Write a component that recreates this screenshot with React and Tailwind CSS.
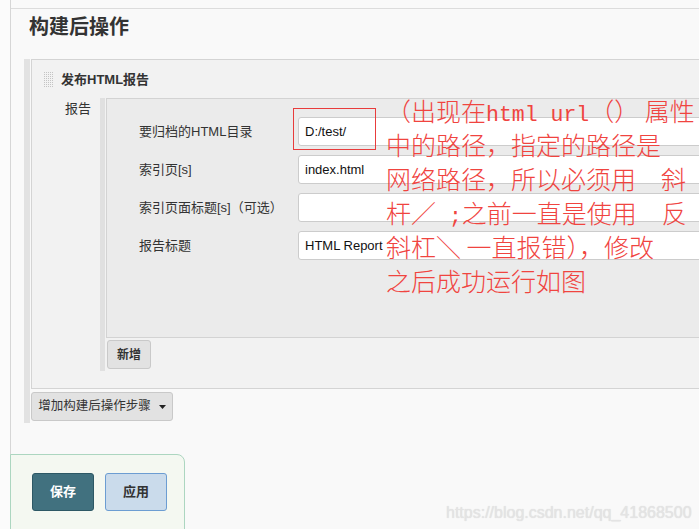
const ui = {
  fontFamily: '"Liberation Sans", "Noto Sans CJK SC", sans-serif',
};

const mono = { fontFamily: '"Liberation Mono", monospace' };

function DragHandle() {
  const dots = [];
  for (let r = 0; r < 8; r++) {
    for (let c = 0; c < 5; c++) {
      dots.push(
        <rect key={r + "-" + c} x={c * 2} y={r * 2} width="1" height="1" fill="#c4c4c4" />
      );
    }
  }
  return (
    <svg width="10" height="16" viewBox="0 0 10 16">
      {dots}
    </svg>
  );
}

function Field({ label, value }) {
  return (
    <div className="flex items-center h-[29px]">
      <div className="w-[159px] shrink-0 text-[13px] text-[#333]">{label}</div>
      <div className="flex-1 h-[29px] bg-white border border-[#cccccc] rounded-[3px] flex items-center px-[6px] text-[13px] text-[#111]">
        {value}
      </div>
    </div>
  );
}

export default function App() {
  return (
    <div
      className="w-[699px] h-[529px] overflow-hidden relative bg-[#f9f9f9] flex"
      style={ui}
    >
      {/* left strip */}
      <div className="w-[11px] shrink-0 bg-[#fbfbfb] border-r border-[#d6d6d6]" />

      <div className="flex-1 min-w-0 flex flex-col">
        <div className="h-[9px] shrink-0 border-b border-[#dcdcdc]" />

        <h1 className="ml-[18px] mt-[4px] text-[20px] leading-[28px] font-bold text-[#333]">
          构建后操作
        </h1>

        {/* publisher section */}
        <div className="ml-[13px] mt-[18px] w-[760px] shrink-0 border-l-[6px] border-[#e2e2e2] pb-[2px]">
          <div className="ml-[1px] border-t border-b border-l border-[#d4d4d4] bg-[#f2f2f2] pb-[17px]">
            <div className="flex items-center mt-[10px] h-[20px] pl-[12px] gap-[7px]">
              <DragHandle />
              <span className="text-[13px] font-bold text-[#333]">发布HTML报告</span>
            </div>

            <div className="flex mt-[8px]">
              <div className="w-[68px] shrink-0 text-right pr-[9px] pt-[2px] text-[13px] leading-[18px] text-[#333]">
                报告
              </div>

              <div className="flex-1 border-l-[5px] border-[#e0e0e0] pb-[2px]">
                <div className="ml-[1px] border-t border-b border-l border-[#d3d3d3] bg-[#ebebeb] pt-[18px] pb-[77px] pl-[32px] flex flex-col gap-[9px]">
                  <Field label="要归档的HTML目录" value="D:/test/" />
                  <Field label="索引页[s]" value="index.html" />
                  <Field label="索引页面标题[s]（可选）" value="" />
                  <Field label="报告标题" value="HTML Report" />
                </div>
                <button className="mt-[2px] ml-[2px] w-[44px] h-[29px] bg-[#e2e2e2] border border-[#c9c9c9] rounded-[3px] text-[12px] font-bold text-[#333]">
                  新增
                </button>
              </div>
            </div>
          </div>

          <button className="mt-[3px] ml-[1px] w-[142px] h-[29px] bg-[#e2e2e2] border border-[#c9c9c9] rounded-[3px] text-[12.5px] text-[#333] flex items-center justify-center gap-[8px]">
            <span>增加构建后操作步骤</span>
            <svg width="7" height="4" viewBox="0 0 7 4">
              <path d="M0 0h7L3.5 4z" fill="#222" />
            </svg>
          </button>
        </div>

        {/* bottom sticky bar */}
        <div className="ml-[-1px] mt-[31px] w-[175px] h-[80px] shrink-0 bg-[#f4f8f1] border border-[#acd6c0] rounded-tr-[8px] flex gap-[11px] pl-[21px] pt-[18px]">
          <button className="w-[62px] h-[38px] bg-[#41717f] border border-[#2d5865] rounded-[3px] text-white text-[13px] font-bold">
            保存
          </button>
          <button className="w-[62px] h-[38px] bg-[#cadbeb] border border-[#6c9dd2] rounded-[3px] text-[#333] text-[13px] font-bold">
            应用
          </button>
        </div>
      </div>

      {/* annotation box */}
      <div className="absolute left-[293px] top-[108px] w-[83px] h-[42px] border border-[#e83c3c]" />

      {/* annotation text */}
      <div
        className="absolute left-[386px] top-[93px] text-[25px] text-[#f0443f] whitespace-pre"
        style={{ fontFamily: '"Noto Sans CJK SC", sans-serif', fontWeight: 300 }}
      >
        <div className="h-[34px] leading-[34px]">
          （出现在<span className="text-[21.5px] leading-none font-normal" style={mono}>html url</span>（） 属性
        </div>
        <div className="h-[34px] leading-[34px]">中的路径，指定的路径是</div>
        <div className="h-[34px] leading-[34px]">网络路径，所以必须用　斜</div>
        <div className="h-[34px] leading-[34px]">
          杆／<span className="text-[21.5px] leading-none" style={mono}> ;</span>之前一直是使用　反
        </div>
        <div className="h-[34px] leading-[34px]">斜杠＼ 一直报错），修改</div>
        <div className="h-[34px] leading-[34px]">之后成功运行如图</div>
      </div>

      {/* watermark */}
      <div
        className="absolute left-[446px] top-[501px] text-[16px] text-[#e4e4e4]"
        style={{ textShadow: "0 0 1px #d8d8d8" }}
      >
        https://blog.csdn.net/qq_41868500
      </div>
    </div>
  );
}
